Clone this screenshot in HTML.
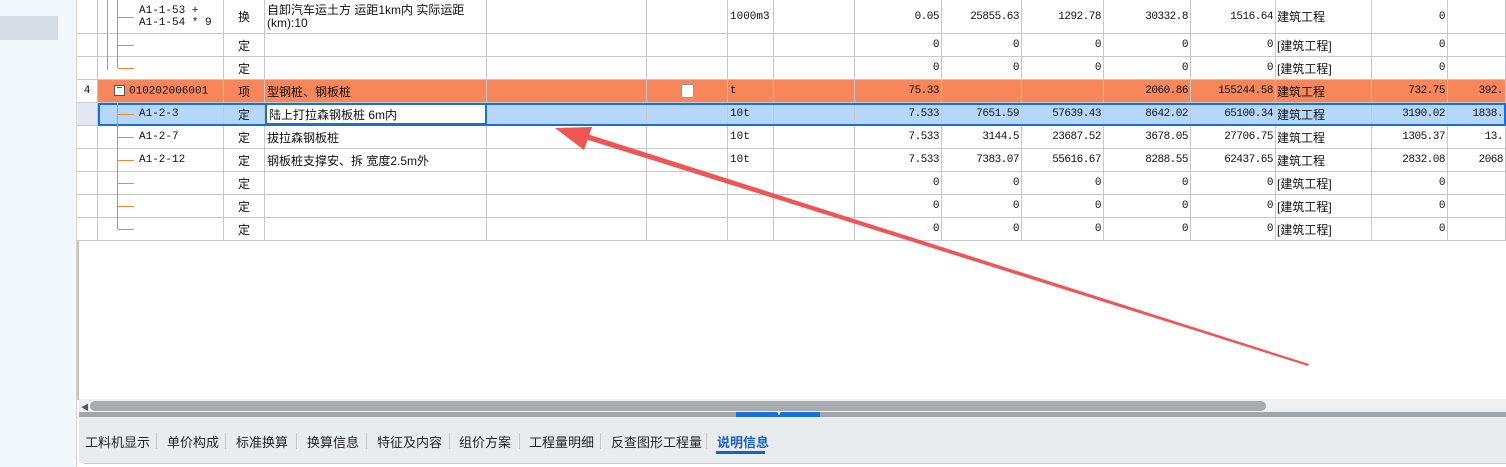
<!DOCTYPE html><html><head><meta charset="utf-8"><style>
body{margin:0;width:1506px;height:467px;overflow:hidden;background:#fff;font-family:"Liberation Sans","Noto Sans CJK SC",sans-serif;font-size:12px;color:#111;position:relative}
.a{position:absolute}
.r{position:absolute;left:77px;width:1429px;border-bottom:1px solid #c8c8c8}
.c{position:absolute;top:0;height:100%;border-right:1px solid #c8c8c8;box-sizing:border-box;white-space:nowrap;overflow:hidden;display:flex;align-items:center;padding:0 2px}
.n{justify-content:flex-end;font-family:"Liberation Mono",monospace;font-size:11px;letter-spacing:-0.5px}
.m{font-family:"Liberation Mono",monospace;font-size:11px}
.ctr{justify-content:center}
.tab{position:absolute;top:432px;font-size:13px;color:#222}
.sep{position:absolute;top:433px;width:1px;height:16px;background:#c8c8c8}
</style></head><body>
<div class="a" style="left:0;top:0;width:76px;height:467px;background:#f2f8fc;border-right:1px solid #d0d6dc"></div>
<div class="a" style="left:0;top:16px;width:58px;height:24px;background:#d7dde5"></div>
<div class="a" style="left:77px;top:0;width:2px;height:400px;background:#c4c4c4"></div>
<div id="g"></div>
<div class="a" style="left:107px;top:0;width:1px;height:70px;background:#f08a30"></div>
<div class="a" style="left:117px;top:0;width:1px;height:68px;background:#f08a30"></div>
<div class="a" style="left:117px;top:103px;width:1px;height:126px;background:#f08a30"></div>
<div class="a" style="left:79px;top:399px;width:1427px;height:13px;background:#eef0f2"></div>
<div class="a" style="left:90px;top:401px;width:1176px;height:10px;background:#a9acaf;border-radius:5px"></div>
<div class="a" style="left:81px;top:402px;font-size:8px;color:#555">◀</div>
<div class="a" style="left:79px;top:412px;width:1427px;height:5px;background:#a3a6a9"></div>
<div class="a" style="left:736px;top:412px;width:84px;height:5px;background:#1a6fd8"></div>
<div class="a" style="left:776px;top:411px;font-size:6px;color:#fff">▼</div>
<div class="a" style="left:79px;top:417px;width:1427px;height:46px;background:#e9ecef"></div>
<div class="a" style="left:84px;top:463px;width:1422px;height:1px;background:#c8c8c8"></div>
<span class="tab" style="left:85px">工料机显示</span><div class="sep" style="left:156px"></div>
<span class="tab" style="left:167px">单价构成</span><div class="sep" style="left:225px"></div>
<span class="tab" style="left:236px">标准换算</span><div class="sep" style="left:296px"></div>
<span class="tab" style="left:307px">换算信息</span><div class="sep" style="left:366px"></div>
<span class="tab" style="left:377px">特征及内容</span><div class="sep" style="left:449px"></div>
<span class="tab" style="left:459px">组价方案</span><div class="sep" style="left:519px"></div>
<span class="tab" style="left:529px">工程量明细</span><div class="sep" style="left:600px"></div>
<span class="tab" style="left:611px">反查图形工程量</span><div class="sep" style="left:706px"></div>
<span class="tab" style="left:717px;color:#1a5fd0;font-weight:bold">说明信息</span>
<div class="a" style="left:716px;top:451px;width:49px;height:3px;background:#1a5fd0"></div>
<svg class="a" style="left:0;top:0" width="1506" height="467"><polygon points="1308,366 582,138 584,133 1309,364" fill="#f05555"/><polygon points="555,128 592,127 584,150" fill="#f05555"/></svg>
<script>
var xs=[77,98,224,265,487,647,728,774,855,942,1022,1104,1191,1276,1372,1448,1506];
var rows=[
[0,34,'',['A1-1-53 +<br>A1-1-54 * 9','换','自卸汽车运土方 运距1km内  实际运距<br>(km):10','','','1000m3','','0.05','25855.63','1292.78','30332.8','1516.64','建筑工程','0','']],
[34,23,'',['','定','','','','','','0','0','0','0','0','[建筑工程]','0','']],
[57,23,'',['','定','','','','','','0','0','0','0','0','[建筑工程]','0','']],
[80,23,'#f7875b',['010202006001','项','型钢桩、钢板桩','','','t','','75.33','','','2060.86','155244.58','建筑工程','732.75','392.']],
[103,23,'#b6d7fb',['A1-2-3','定','陆上打拉森钢板桩 6m内','','','10t','','7.533','7651.59','57639.43','8642.02','65100.34','建筑工程','3190.02','1838.']],
[126,23,'',['A1-2-7','定','拔拉森钢板桩','','','10t','','7.533','3144.5','23687.52','3678.05','27706.75','建筑工程','1305.37','13.']],
[149,23,'',['A1-2-12','定','钢板桩支撑安、拆 宽度2.5m外','','','10t','','7.533','7383.07','55616.67','8288.55','62437.65','建筑工程','2832.08','2068']],
[172,23,'',['','定','','','','','','0','0','0','0','0','[建筑工程]','0','']],
[195,23,'',['','定','','','','','','0','0','0','0','0','[建筑工程]','0','']],
[218,23,'',['','定','','','','','','0','0','0','0','0','[建筑工程]','0','']]];
var h='';
rows.forEach(function(r,i){
 h+='<div class="r" style="top:'+r[0]+'px;height:'+(r[1]-1)+'px;background:'+(r[2]||'#fff')+'">';
 var num=i==3?'4':'';
 h+='<div class="c m ctr" style="left:0;width:21px;background:'+(i==4?'#e3e8f2':'#fff')+'">'+num+'</div>';
 for(var k=0;k<15;k++){
  var l=xs[k+1]-77,w=xs[k+2]-xs[k+1],t=r[3][k],cls='c';
  if(k==0){cls+=' m';t='<span style="padding-left:'+(i==3?14:39)+'px;line-height:12px">'+(i==3?'<span style="display:inline-block;width:9px;height:9px;border:1px solid #555;background:#fff;line-height:8px;text-align:center;font-size:10px;vertical-align:middle;margin-right:4px">−</span>':'')+t+'</span>';}
  else if(k==1)cls+=' ctr';
  else if(k>=7&&k!=12)cls+=' n';
  else if(k==5)cls+=' m';
  if(k==2&&i==0)t='<span style="line-height:13px">'+t+'</span>';
  if(k==4&&i==3)t='<span style="margin-left:32px;width:11px;height:12px;background:#fff;border:1px solid #999;border-radius:2px;display:inline-block"></span>';
  var st='';
  if(k==12)st='padding-left:1px;';
  if(i==4&&k==2)st='background:#fff;border:2px solid #1a6fe0;';
  h+='<div class="'+cls+'" style="left:'+l+'px;width:'+w+'px;'+st+'">'+t+'</div>';
 }
 h+='</div>';
 if(i!=3){h+='<div class="a" style="left:118px;top:'+(i==0?17:r[0]+11)+'px;width:16px;height:1px;background:#f08a30"></div>';}
});
h+='<div class="a" style="left:98px;top:103px;width:1408px;height:23px;border:2px solid #1a6fe0;box-sizing:border-box;pointer-events:none"></div>';
document.getElementById('g').innerHTML=h;
</script>
</body></html>
